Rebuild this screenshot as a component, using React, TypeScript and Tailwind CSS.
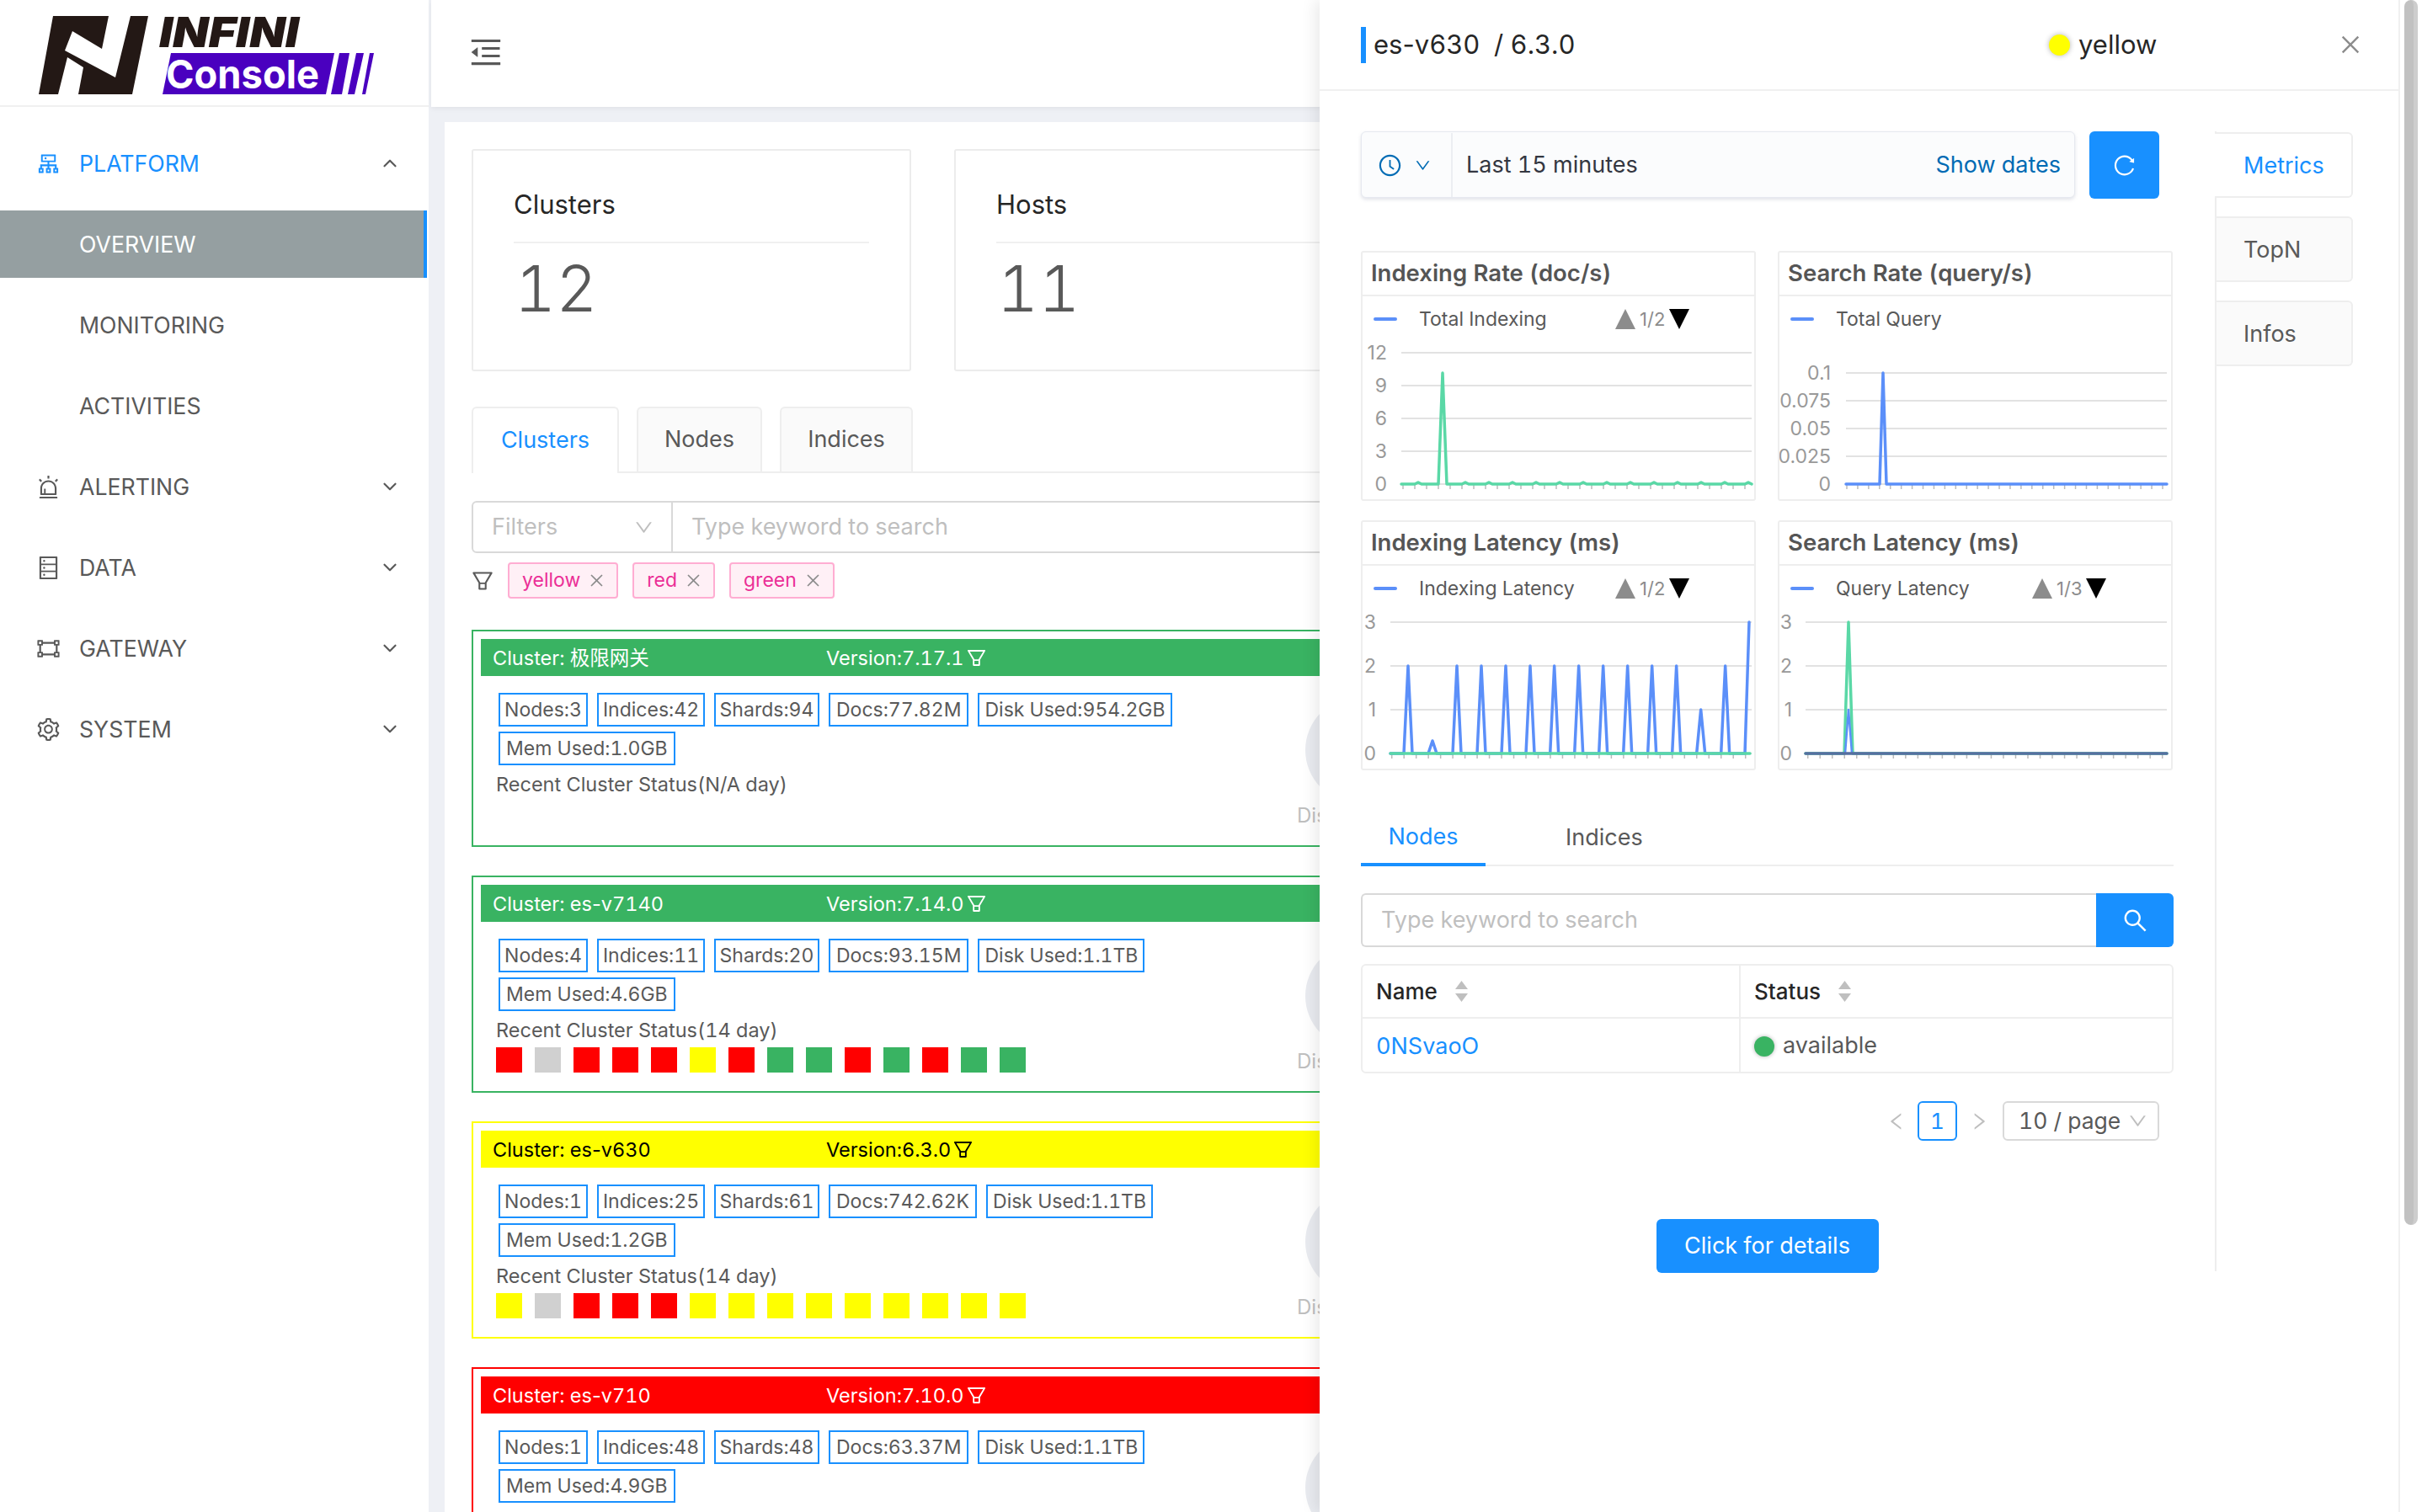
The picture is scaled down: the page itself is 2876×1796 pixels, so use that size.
import {
  AiOutlineAlert,
  AiOutlineCluster,
  AiOutlineClockCircle,
  AiOutlineClose,
  AiOutlineDatabase,
  AiOutlineDown,
  AiOutlineFilter,
  AiOutlineGateway,
  AiOutlineLeft,
  AiOutlineMenuFold,
  AiOutlineReload,
  AiOutlineRight,
  AiOutlineSearch,
  AiOutlineSetting,
} from "react-icons/ai";
import { ChevronDown, ChevronUp } from "lucide-react";

const Logo = () => (
  <svg width="420" height="100" viewBox="40 14 420 100" className="overflow-visible">
    <polygon
      fill="#231815"
      points="46,112 63,19 129,19 121,58 86,37 77,60 137,92 155,19 176,19 157,112 93,112 99,80 80,68 69,112"
    />
    <text
      x="189"
      y="56"
      fontFamily="Inter"
      fontWeight="900"
      fontStyle="italic"
      fontSize="50"
      fill="#231815"
      textLength="166"
      lengthAdjust="spacingAndGlyphs"
    >
      INFINI
    </text>
    <polygon fill="#4a00bf" points="193,112 203,63 397,63 387,112" />
    <polygon fill="#4a00bf" points="393,112 403,63 415,63 406,112" />
    <polygon fill="#4a00bf" points="413,112 423,63 432,63 421,112" />
    <polygon fill="#4a00bf" points="430,112 439,63 444,63 434,112" />
    <text
      x="197"
      y="105"
      fontFamily="Inter"
      fontWeight="700"
      fontSize="47"
      fill="#fff"
      textLength="182"
      lengthAdjust="spacingAndGlyphs"
    >
      Console
    </text>
  </svg>
);

const navItems = [
  { label: "ALERTING", Icon: AiOutlineAlert },
  { label: "DATA", Icon: AiOutlineDatabase },
  { label: "GATEWAY", Icon: AiOutlineGateway },
  { label: "SYSTEM", Icon: AiOutlineSetting },
];

const Sidebar = () => (
  <aside className="w-[509px] shrink-0 bg-white h-full">
    <div className="h-[127px] border-b-2 border-[#f0f0f0] pl-[40px] pt-[14px]">
      <Logo />
    </div>
    <nav className="flex flex-col gap-[16px] pt-[27px] text-[26.7px] text-[#595959]">
      <div className="h-[80px] flex items-center pl-[42px] pr-[33px] text-[#1890ff]">
        <AiOutlineCluster size={31} className="mr-[21px]" />
        <span className="flex-1">PLATFORM</span>
        <ChevronUp size={26} strokeWidth={2} className="text-[#595959]" />
      </div>
      <div className="h-[80px] flex items-center pl-[94px] bg-[#959fa1] text-white border-r-[4px] border-[#1890ff] mr-[2px]">
        OVERVIEW
      </div>
      <div className="h-[80px] flex items-center pl-[94px]">MONITORING</div>
      <div className="h-[80px] flex items-center pl-[94px]">ACTIVITIES</div>
      {navItems.map(({ label, Icon }) => (
        <div key={label} className="h-[80px] flex items-center pl-[42px] pr-[33px]">
          <Icon size={31} className="mr-[21px]" />
          <span className="flex-1">{label}</span>
          <ChevronDown size={26} strokeWidth={2} />
        </div>
      ))}
    </nav>
  </aside>
);

const StatCard = ({ title, value }: { title: string; value: string }) => (
  <div className="w-[522px] h-[264px] shrink-0 border-2 border-[#ececec] rounded-[3px] px-[48px] pt-[46px]">
    <div className="text-[31px] leading-[36px] text-[#262626] pb-[26px] border-b-2 border-[#f0f0f0]">{title}</div>
    <div className="text-[76px] leading-[80px] font-light text-[#595959] mt-[13px] pl-[1px]">{value}</div>
  </div>
);

const GREEN = "#39b362";
const RED = "#ff0000";
const YELLOW = "#ffff00";
const GRAY = "#d0d0d0";

// Inter's tabular figures also widen the hyphen, so the prefix keeps normal spacing
const EsName = ({ name }: { name: string }) =>
  name.startsWith("es-") ? (
    <>
      <span className="normal-nums">es-</span>
      {name.slice(3)}
    </>
  ) : (
    <>{name}</>
  );

const statWidths = ["w-[106px]", "w-[128px]", "w-[125px]", "px-[7px]", "px-[6px]", "px-[7px]"];

type ClusterProps = {
  color: string;
  textColor: string;
  name: string;
  version: string;
  stats: string[];
  recent?: string;
  days: string[];
};

const ClusterCard = ({ color, textColor, name, version, stats, recent, days }: ClusterProps) => (
  <div className="h-[258px] shrink-0 border-2 p-[9px] pb-0" style={{ borderColor: color }}>
    <div
      className="h-[44px] flex items-center text-[23.5px] pt-[1px]"
      style={{ backgroundColor: color, color: textColor }}
    >
      <span className="w-[410px] pl-[14px]">
        Cluster: <EsName name={name} />
      </span>
      <span>Version:{version}</span>
      <AiOutlineFilter size={27} className="ml-[1px]" />
    </div>
    <div className="flex">
      <div className="w-[969px] pl-[21px] pt-[20px] shrink-0">
        <div className="flex flex-wrap gap-x-[11px] gap-y-[6px] w-[900px]">
          {stats.map((s, i) => (
            <div
              key={s}
              className={`${statWidths[i]} h-[40px] flex items-center justify-center pt-[1px] border-2 border-[#1890ff] text-[23px] text-[#595959]`}
            >
              {s}
            </div>
          ))}
        </div>
        <div className="text-[23.5px] leading-[34px] text-[#595959] mt-[6px] -ml-[3px]">
          Recent Cluster Status({recent})
        </div>
        <div className="flex gap-[15px] mt-[3px] -ml-[3px]">
          {days.map((d, i) => (
            <div key={i} className="w-[31px] h-[30px]" style={{ backgroundColor: d }} />
          ))}
        </div>
      </div>
      <div>
        <div className="w-[126px] h-[126px] rounded-full bg-[#e9ebf0] ml-[10px] mt-[25px]" />
        <div className="text-[24px] leading-[30px] text-[#bfbfbf]">Disk Used</div>
      </div>
    </div>
  </div>
);

const clusters: ClusterProps[] = [
  {
    color: GREEN,
    textColor: "#fff",
    name: "极限网关",
    version: "7.17.1",
    stats: ["Nodes:3", "Indices:42", "Shards:94", "Docs:77.82M", "Disk Used:954.2GB", "Mem Used:1.0GB"],
    recent: "N/A day",
    days: [],
  },
  {
    color: GREEN,
    textColor: "#fff",
    name: "es-v7140",
    version: "7.14.0",
    stats: ["Nodes:4", "Indices:11", "Shards:20", "Docs:93.15M", "Disk Used:1.1TB", "Mem Used:4.6GB"],
    recent: "14 day",
    days: [RED, GRAY, RED, RED, RED, YELLOW, RED, GREEN, GREEN, RED, GREEN, RED, GREEN, GREEN],
  },
  {
    color: YELLOW,
    textColor: "#000",
    name: "es-v630",
    version: "6.3.0",
    stats: ["Nodes:1", "Indices:25", "Shards:61", "Docs:742.62K", "Disk Used:1.1TB", "Mem Used:1.2GB"],
    recent: "14 day",
    days: [YELLOW, GRAY, RED, RED, RED, YELLOW, YELLOW, YELLOW, YELLOW, YELLOW, YELLOW, YELLOW, YELLOW, YELLOW],
  },
  {
    color: RED,
    textColor: "#fff",
    name: "es-v710",
    version: "7.10.0",
    stats: ["Nodes:1", "Indices:48", "Shards:48", "Docs:63.37M", "Disk Used:1.1TB", "Mem Used:4.9GB"],
    recent: "14 day",
    days: [],
  },
];

const Tag = ({ label }: { label: string }) => (
  <div className="h-[43px] flex items-center gap-[9px] px-[15px] pr-[13px] rounded-[4px] border-2 border-[#ffadd2] bg-[#fff0f6] text-[23px] text-[#eb2f96]">
    {label}
    <AiOutlineClose size={21} className="text-[#8c8c8c]" />
  </div>
);

const BLUE = "#5b8ff9";
const MINT = "#5ad8a6";

const spikeLine = (xs: number[], tops: number[], base: number, half: number) =>
  xs.map((x, i) => `${x - half},${base} ${x},${tops[i]} ${x + half},${base}`).join(" ");

const axisTicks = (from: number, to: number) =>
  Array.from({ length: 30 }, (_, k) => from + ((to - from) / 29) * k);

type ChartProps = {
  title: string;
  legend: string;
  pager?: string;
  labels: [string, number][];
  labelX: number;
  gridFrom: number;
  gridTo: number;
  tickFrom: number;
  tickTo: number;
  children: React.ReactNode;
};

const ChartCard = ({ title, legend, pager, labels, labelX, gridFrom, gridTo, tickFrom, tickTo, children }: ChartProps) => (
  <div className="h-[297px] border-2 border-[#eeeeee] rounded-[3px] overflow-hidden">
    <div className="h-[52px] flex items-center pl-[10px] text-[27.5px] font-semibold text-[#555] border-b-2 border-[#eeeeee]">
      {title}
    </div>
    <div className="h-[46px] flex items-center pl-[13px] pt-[8px] text-[23px] text-[#595959]">
      <div className="w-[28px] h-[4px] rounded-full bg-[#5b8ff9] mr-[26px]" />
      <span className="w-[233px] whitespace-nowrap">{legend}</span>
      {pager && (
        <>
          <svg width="24" height="24" viewBox="0 0 24 24">
            <polygon points="12,0 24,24 0,24" fill="#8c8c8c" />
          </svg>
          <span className="mx-[5px] text-[22px] text-[#8c8c8c] normal-nums">{pager}</span>
          <svg width="24" height="24" viewBox="0 0 24 24">
            <polygon points="0,0 24,0 12,24" fill="#000" />
          </svg>
        </>
      )}
    </div>
    <svg width="465" height="195" viewBox="0 0 465 195">
      <g transform="translate(-2,0)">
        {labels.map(([t, y]) => (
          <g key={t}>
            <line x1={gridFrom} x2={gridTo} y1={y} y2={y} stroke="#d9d9d9" strokeWidth="1.5" />
            <text x={labelX} y={y + 8} textAnchor="end" fontFamily="Inter" fontSize="23" fill="#999" className="normal-nums">
              {t}
            </text>
          </g>
        ))}
        {axisTicks(tickFrom, tickTo).map((x) => (
          <line key={x} x1={x} x2={x} y1={177} y2={183} stroke="#bbb" strokeWidth="1.5" />
        ))}
        {children}
      </g>
    </svg>
  </div>
);

const Line = ({ points, color, width = 3.5 }: { points: string; color: string; width?: number }) => (
  <polyline points={points} fill="none" stroke={color} strokeWidth={width} strokeLinejoin="round" strokeLinecap="round" />
);

const bumps = [124, 152, 180, 208, 236, 264, 292, 320, 348, 376, 404, 432, 460];
const indexingRate = () => {
  const pts = ["48,177", "64,177", "68,175", "72,177", "92,177", "97,45", "102,177"];
  bumps.forEach((x) => pts.push(`${x - 4},177`, `${x},175`, `${x + 4},177`));
  return pts.join(" ");
};

const latencyX = [216, 303, 390, 477, 564, 651, 737, 824, 911, 998, 1085, 1172, 1259, 1346].map((z) => z / 3 - 16);
const latencyTops = [73, 162, 73, 73, 73, 73, 73, 73, 73, 73, 73, 73, 125, 73];

const Charts = () => (
  <div className="grid grid-cols-[469px_469px] gap-x-[26px] gap-y-[23px] mt-[62px]">
    <ChartCard
      title="Indexing Rate (doc/s)"
      legend="Total Indexing"
      pager="1/2"
      labels={[["12", 21], ["9", 60], ["6", 99], ["3", 138], ["0", 177]]}
      labelX={31}
      gridFrom={48}
      gridTo={464}
      tickFrom={50}
      tickTo={456}
    >
      <Line points={indexingRate()} color={MINT} />
    </ChartCard>
    <ChartCard
      title="Search Rate (query/s)"
      legend="Total Query"
      labels={[["0.1", 45], ["0.075", 78], ["0.05", 111], ["0.025", 144], ["0", 177]]}
      labelX={63}
      gridFrom={81}
      gridTo={462}
      tickFrom={82}
      tickTo={457}
    >
      <Line points="81,177 121,177 125,45 129,177 462,177" color={BLUE} />
    </ChartCard>
    <ChartCard
      title="Indexing Latency (ms)"
      legend="Indexing Latency"
      pager="1/2"
      labels={[["3", 21], ["2", 73], ["1", 125], ["0", 177]]}
      labelX={18}
      gridFrom={35}
      gridTo={464}
      tickFrom={36.7}
      tickTo={456.7}
    >
      <Line points={`35,177 ${spikeLine(latencyX, latencyTops, 177, 5)} 456,177 461,21`} color={BLUE} />
      <Line points="35,177 462,177" color={MINT} />
    </ChartCard>
    <ChartCard
      title="Search Latency (ms)"
      legend="Query Latency"
      pager="1/3"
      labels={[["3", 21], ["2", 73], ["1", 125], ["0", 177]]}
      labelX={17}
      gridFrom={33}
      gridTo={462}
      tickFrom={35.7}
      tickTo={456.7}
    >
      <Line points="33,177 79,177 84,21 89,177 462,177" color={MINT} />
      <Line points="80,177 84,125 88,177" color={BLUE} width={2.5} />
      <Line points="33,177 462,177" color="#566fa0" />
    </ChartCard>
  </div>
);

const SortHeader = ({ label, width }: { label: string; width: string }) => (
  <div className={`${width} h-full flex items-center pl-[16px] text-[26px] font-medium text-[#262626] gap-[21px]`}>
    {label}
    <svg width="15" height="25" viewBox="0 0 15 25">
      <polygon points="7.5,0 15,10 0,10" fill="#bfbfbf" />
      <polygon points="0,15 15,15 7.5,25" fill="#bfbfbf" />
    </svg>
  </div>
);

const Drawer = () => (
  <div className="absolute left-[1567px] top-0 w-[1281px] h-[1796px] bg-white shadow-[-6px_0_16px_rgba(0,0,0,0.08)]">
    <div className="h-[108px] border-b-2 border-[#f0f0f0] flex items-center pl-[49px]">
      <div className="w-[817px] h-[43px] border-l-[6px] border-[#1890ff] pl-[9px] flex items-center text-[31px] text-[#262626] whitespace-pre">
        <span className="normal-nums">es-</span>v630{"  "}/ 6.3.0
      </div>
      <div className="w-[25px] h-[25px] rounded-full bg-[#ffff00] shadow-[0_0_6px_rgba(0,0,0,0.3)]" />
      <span className="ml-[10px] text-[31px] text-[#262626]">yellow</span>
      <AiOutlineClose size={30} className="ml-[215px] text-[#8c8c8c]" />
    </div>
    <div className="flex pl-[49px] pt-[48px]">
      <div className="w-[965px] shrink-0">
        <div className="flex gap-[17px]">
          <div className="w-[848px] h-[79px] flex items-center rounded-[6px] bg-[#fbfcfd] border border-[#e6e9f0] shadow-[0_2px_4px_rgba(100,110,140,0.2)] text-[27px] pt-[1px]">
            <div className="w-[108px] h-full flex items-center justify-center gap-[14px] border-r-2 border-[#eceef2] text-[#006bb4] pr-[4px]">
              <AiOutlineClockCircle size={29} />
              <AiOutlineDown size={21} />
            </div>
            <span className="ml-[16px] flex-1 text-[#343741]">Last 15 minutes</span>
            <span className="mr-[16px] text-[#006bb4]">Show dates</span>
          </div>
          <div className="w-[83px] h-[80px] rounded-[6px] bg-[#1890ff] flex items-center justify-center text-white">
            <AiOutlineReload size={29} />
          </div>
        </div>
        <Charts />
        <div className="mt-[46px] h-[68px] flex border-b-2 border-[#eeeeee] text-[27px]">
          <div className="w-[148px] flex items-center justify-center border-b-4 border-[#1890ff] text-[#1890ff] h-[68px] pt-[3px]">
            Nodes
          </div>
          <div className="flex items-center ml-[95px] text-[#595959] pt-[2px]">Indices</div>
        </div>
        <div className="mt-[32px] h-[64px] flex">
          <div className="flex-1 flex items-center pl-[22px] border-2 border-r-0 border-[#d9d9d9] rounded-l-[6px] text-[27px] text-[#bfbfbf]">
            Type keyword to search
          </div>
          <div className="w-[92px] bg-[#1890ff] rounded-r-[6px] flex items-center justify-center text-white">
            <AiOutlineSearch size={33} />
          </div>
        </div>
        <div className="mt-[20px] h-[130px] border-2 border-[#eeeeee] rounded-[6px]">
          <div className="h-[63px] flex border-b-2 border-[#eeeeee]">
            <SortHeader label="Name" width="w-[449px] border-r-2 border-[#eeeeee]" />
            <SortHeader label="Status" width="flex-1" />
          </div>
          <div className="h-[63px] flex text-[27px]">
            <div className="w-[449px] border-r-2 border-[#eeeeee] flex items-center pl-[16px] pt-[3px] text-[#1890ff]">0NSvaoO</div>
            <div className="flex-1 flex items-center pl-[16px] pt-[2px] text-[#595959]">
              <div className="w-[24px] h-[24px] rounded-full bg-[#39b362] mr-[10px] shadow-[0_0_5px_rgba(0,0,0,0.3)]" />
              available
            </div>
          </div>
        </div>
        <div className="mt-[33px] h-[47px] flex items-center justify-end pr-[17px] text-[#bfbfbf]">
          <AiOutlineLeft size={26} />
          <div className="w-[47px] h-[47px] ml-[12px] mr-[13px] flex items-center justify-center border-2 border-[#1890ff] rounded-[6px] text-[26px] text-[#1890ff]">
            1
          </div>
          <AiOutlineRight size={26} />
          <div className="w-[186px] h-[47px] ml-[15px] flex items-center justify-between pl-[17px] pr-[11px] border-2 border-[#d9d9d9] rounded-[6px] text-[26.5px] text-[#595959]">
            10 / page
            <AiOutlineDown size={25} className="text-[#bfbfbf]" />
          </div>
        </div>
        <div className="mt-[93px] flex justify-center">
          <div className="w-[264px] h-[64px] rounded-[6px] bg-[#1890ff] flex items-center justify-center text-[27px] text-white">
            Click for details
          </div>
        </div>
      </div>
      <div className="ml-[49px] w-[164px] h-[1354px] border-l-2 border-[#eeeeee] flex flex-col gap-[22px] pt-[1px] text-[27px]">
        <div className="-ml-[2px] h-[78px] flex items-center pl-[34px] pt-[2px] bg-white border-2 border-l-0 border-[#eeeeee] rounded-r-[6px] text-[#1890ff]">
          Metrics
        </div>
        <div className="h-[78px] flex items-center pl-[32px] pt-[2px] bg-[#fafafa] border-2 border-l-0 border-[#eeeeee] rounded-r-[6px] text-[#595959]">
          TopN
        </div>
        <div className="h-[78px] flex items-center pl-[32px] pt-[2px] bg-[#fafafa] border-2 border-l-0 border-[#eeeeee] rounded-r-[6px] text-[#595959]">
          Infos
        </div>
      </div>
    </div>
  </div>
);

export default function App() {
  return (
    <div className="relative w-[2876px] h-[1796px] overflow-hidden flex bg-[#eef0f5] tabular-nums [font-family:Inter,'Noto_Sans_CJK_SC',sans-serif]">
      <Sidebar />
      <main className="flex-1 min-w-0 pl-[3px]">
        <header className="h-[127px] flex items-center bg-white pl-[43px] pb-[4px] shadow-[0_2px_6px_rgba(0,0,0,0.06)]">
          <AiOutlineMenuFold size={44} className="text-[#595959]" />
        </header>
        <div className="ml-[16px] mt-[18px] h-[1700px] bg-white pl-[32px] pr-[36px] pt-[32px]">
          <div className="flex gap-[51px]">
            <StatCard title="Clusters" value="12" />
            <StatCard title="Hosts" value="11" />
          </div>
          <div className="mt-[42px] h-[79px] flex gap-[21px] border-b-2 border-[#eeeeee] text-[27px] text-[#595959]">
            <div className="w-[175px] h-[79px] flex items-center justify-center border-2 border-b-0 border-[#eeeeee] rounded-t-[6px] bg-white text-[#1890ff]">
              Clusters
            </div>
            <div className="w-[149px] h-[77px] flex items-center justify-center border-2 border-b-0 border-[#eeeeee] rounded-t-[6px] bg-[#fafafa]">
              Nodes
            </div>
            <div className="w-[158px] h-[77px] flex items-center justify-center border-2 border-b-0 border-[#eeeeee] rounded-t-[6px] bg-[#fafafa]">
              Indices
            </div>
          </div>
          <div className="mt-[33px] h-[62px] flex border-2 border-[#d9d9d9] rounded-[6px] text-[27px] text-[#bfbfbf]">
            <div className="w-[237px] flex items-center justify-between pl-[22px] pr-[20px] border-r-2 border-[#d9d9d9]">
              Filters
              <AiOutlineDown size={25} />
            </div>
            <div className="flex items-center pl-[22px]">Type keyword to search</div>
          </div>
          <div className="mt-[11px] flex items-center gap-[17px]">
            <AiOutlineFilter size={30} className="text-[#595959] -mx-[2px]" />
            <Tag label="yellow" />
            <Tag label="red" />
            <Tag label="green" />
          </div>
          <div className="mt-[37px] flex flex-col gap-[34px]">
            {clusters.map((c) => (
              <ClusterCard key={c.name} {...c} />
            ))}
          </div>
        </div>
      </main>
      <Drawer />
      {/* white strip right of the drawer, with the page scrollbar thumb on it */}
      <div className="absolute left-[2848px] top-0 w-[28px] h-[1796px] bg-white border-l-2 border-[#f0f0f0]">
        <div className="ml-[5px] w-[16px] h-[1455px] rounded-[8px] bg-[#c1c1c1] border-r-[5px] border-[#cdcdcd]" />
      </div>
    </div>
  );
}
